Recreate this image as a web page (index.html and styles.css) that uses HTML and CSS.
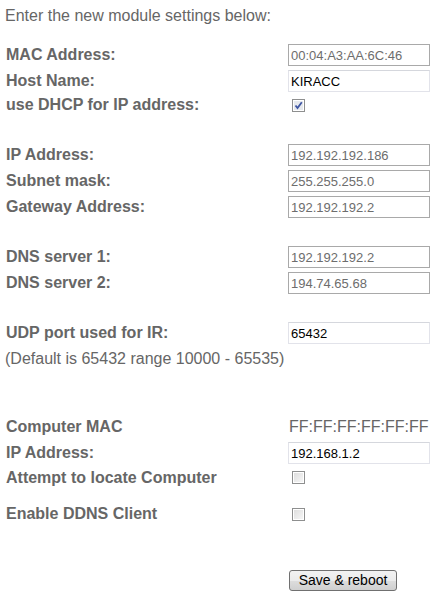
FILE: index.html
```html
<!DOCTYPE html>
<html lang="en">
<head>
    <meta charset="UTF-8">
    <title>Module settings</title>
    <link rel="stylesheet" href="styles.css">
</head>
<body>
    <p class="intro">Enter the new module settings below:</p>

    <form class="settings">
        <div class="row">
            <label class="name">MAC Address:</label>
            <input class="field" type="text" value="00:04:A3:AA:6C:46" disabled>
        </div>
        <div class="row">
            <label class="name">Host Name:</label>
            <input class="field" type="text" value="KIRACC">
        </div>
        <div class="row short">
            <label class="name">use DHCP for IP address:</label>
            <span class="check on">
                <svg width="9" height="9" viewBox="0 0 9 9"><path d="M1.5 4.5 L3.5 7 L7.8 1.2" fill="none" stroke="#3f56a3" stroke-width="1.8"/></svg>
            </span>
        </div>

        <div class="space s26"></div>

        <div class="row">
            <label class="name">IP Address:</label>
            <input class="field" type="text" value="192.192.192.186" disabled>
        </div>
        <div class="row">
            <label class="name">Subnet mask:</label>
            <input class="field" type="text" value="255.255.255.0" disabled>
        </div>
        <div class="row">
            <label class="name">Gateway Address:</label>
            <input class="field" type="text" value="192.192.192.2" disabled>
        </div>

        <div class="space s24"></div>

        <div class="row">
            <label class="name">DNS server 1:</label>
            <input class="field" type="text" value="192.192.192.2" disabled>
        </div>
        <div class="row">
            <label class="name">DNS server 2:</label>
            <input class="field" type="text" value="194.74.65.68" disabled>
        </div>

        <div class="space s24"></div>

        <div class="row">
            <label class="name">UDP port used for IR:</label>
            <input class="field" type="text" value="65432">
        </div>
        <div class="row note">(Default is 65432 range 10000 - 65535)</div>

        <div class="space s42"></div>

        <div class="row">
            <label class="name">Computer MAC</label>
            <span class="mac">FF:FF:FF:FF:FF:FF</span>
        </div>
        <div class="row">
            <label class="name">IP Address:</label>
            <input class="field" type="text" value="192.168.1.2">
        </div>
        <div class="row mid">
            <label class="name">Attempt to locate Computer</label>
            <span class="check"></span>
        </div>

        <div class="space s14"></div>

        <div class="row short">
            <label class="name">Enable DDNS Client</label>
            <span class="check"></span>
        </div>

        <div class="space s42"></div>

        <div class="row">
            <span></span>
            <button class="save" type="button">Save &amp; reboot</button>
        </div>
    </form>
</body>
</html>
```

FILE: styles.css
```css
body {
    margin: 0;
    padding: 7px 5px;
    font-family: "Liberation Sans", Arial, sans-serif;
    color: #666;
    background: #fff;
}

.intro {
    margin: 0 0 17px 0;
    font-size: 16px;
    line-height: 18px;
}

.settings {
    display: flex;
    flex-direction: column;
}

.row {
    display: grid;
    grid-template-columns: 283px auto;
    align-items: center;
    height: 26px;
}

.row.short {
    height: 22px;
}

.row.mid {
    height: 23px;
}

.name {
    padding-left: 1px;
    font-size: 16px;
    font-weight: bold;
    line-height: 18px;
}

.note {
    display: block;
    line-height: 26px;
    font-size: 16px;
}

.space.s14 { height: 14px; }
.space.s24 { height: 24px; }
.space.s26 { height: 26px; }
.space.s42 { height: 42px; }

.field {
    box-sizing: border-box;
    width: 142px;
    height: 22px;
    margin: 0;
    padding: 0 2px;
    font-family: "Liberation Sans", Arial, sans-serif;
    font-size: 13px;
    color: #000;
    background: #fff;
    border: 1px solid #e2e3ea;
    border-top-color: #d5d7dd;
    outline: none;
}

.field:disabled {
    color: #6d6d6d;
    border-color: #a9a9a9;
}

.mac {
    font-size: 16px;
    line-height: 18px;
    padding-left: 1px;
}

.check {
    box-sizing: border-box;
    display: flex;
    align-items: center;
    justify-content: center;
    width: 13px;
    height: 13px;
    margin-left: 4px;
    border: 1px solid #8e8f8f;
    background: linear-gradient(135deg, #dcdcdc, #f8f8f8);
    box-shadow: inset 0 0 0 1px #fff;
}

.check.on {
    background: #e6e9ee;
}

.save {
    box-sizing: border-box;
    width: 108px;
    height: 21px;
    margin-left: 1px;
    padding: 0;
    font-family: "Liberation Sans", Arial, sans-serif;
    font-size: 14px;
    color: #000;
    border: 1px solid #707070;
    border-radius: 3px;
    background: linear-gradient(#f2f2f2 0%, #ebebeb 50%, #dddddd 51%, #cfcfcf 100%);
}
```
